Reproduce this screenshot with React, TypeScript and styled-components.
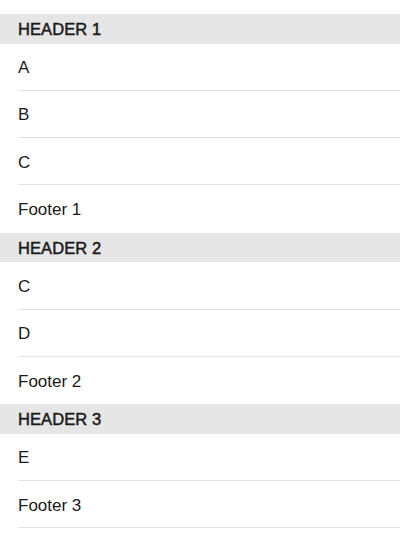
import React from "react";
import styled, { createGlobalStyle } from "styled-components";

const Global = createGlobalStyle`
  html, body { margin: 0; padding: 0; background: #ffffff; }
  body { font-family: "Liberation Sans", Arial, sans-serif; -webkit-font-smoothing: antialiased; }
`;

const List = styled.div`
  display: flex;
  flex-direction: column;
  padding-top: 14px;
  background: #ffffff;
`;

const SectionHeader = styled.div`
  height: 29.5px;
  display: flex;
  align-items: center;
  padding-left: 18px;
  padding-top: 1px;
  box-sizing: border-box;
  background: #e6e6e6;
  color: #1a1a1a;
  font-size: 16.5px;
  font-weight: 400;
  -webkit-text-stroke: 0.5px #1a1a1a;
  letter-spacing: 0.1px;
`;

const Row = styled.div<{ $separator: boolean }>`
  height: 47.33px;
  box-sizing: border-box;
  margin-left: 18px;
  display: flex;
  align-items: center;
  padding-top: 3px;
  border-bottom: 1px solid ${(p) => (p.$separator ? "#e2e2e2" : "transparent")};
  color: #1a1a1a;
  font-size: 17px;
`;

const sections = [
  { title: "HEADER 1", items: ["A", "B", "C"], footer: "Footer 1" },
  { title: "HEADER 2", items: ["C", "D"], footer: "Footer 2" },
  { title: "HEADER 3", items: ["E"], footer: "Footer 3" },
];

export default function App() {
  return (
    <>
      <Global />
      <List>
        {sections.map((s, si) => (
          <React.Fragment key={s.title}>
            <SectionHeader>{s.title}</SectionHeader>
            {s.items.map((it, i) => (
              <Row key={i} $separator>
                {it}
              </Row>
            ))}
            <Row $separator={si === sections.length - 1}>{s.footer}</Row>
          </React.Fragment>
        ))}
      </List>
    </>
  );
}
